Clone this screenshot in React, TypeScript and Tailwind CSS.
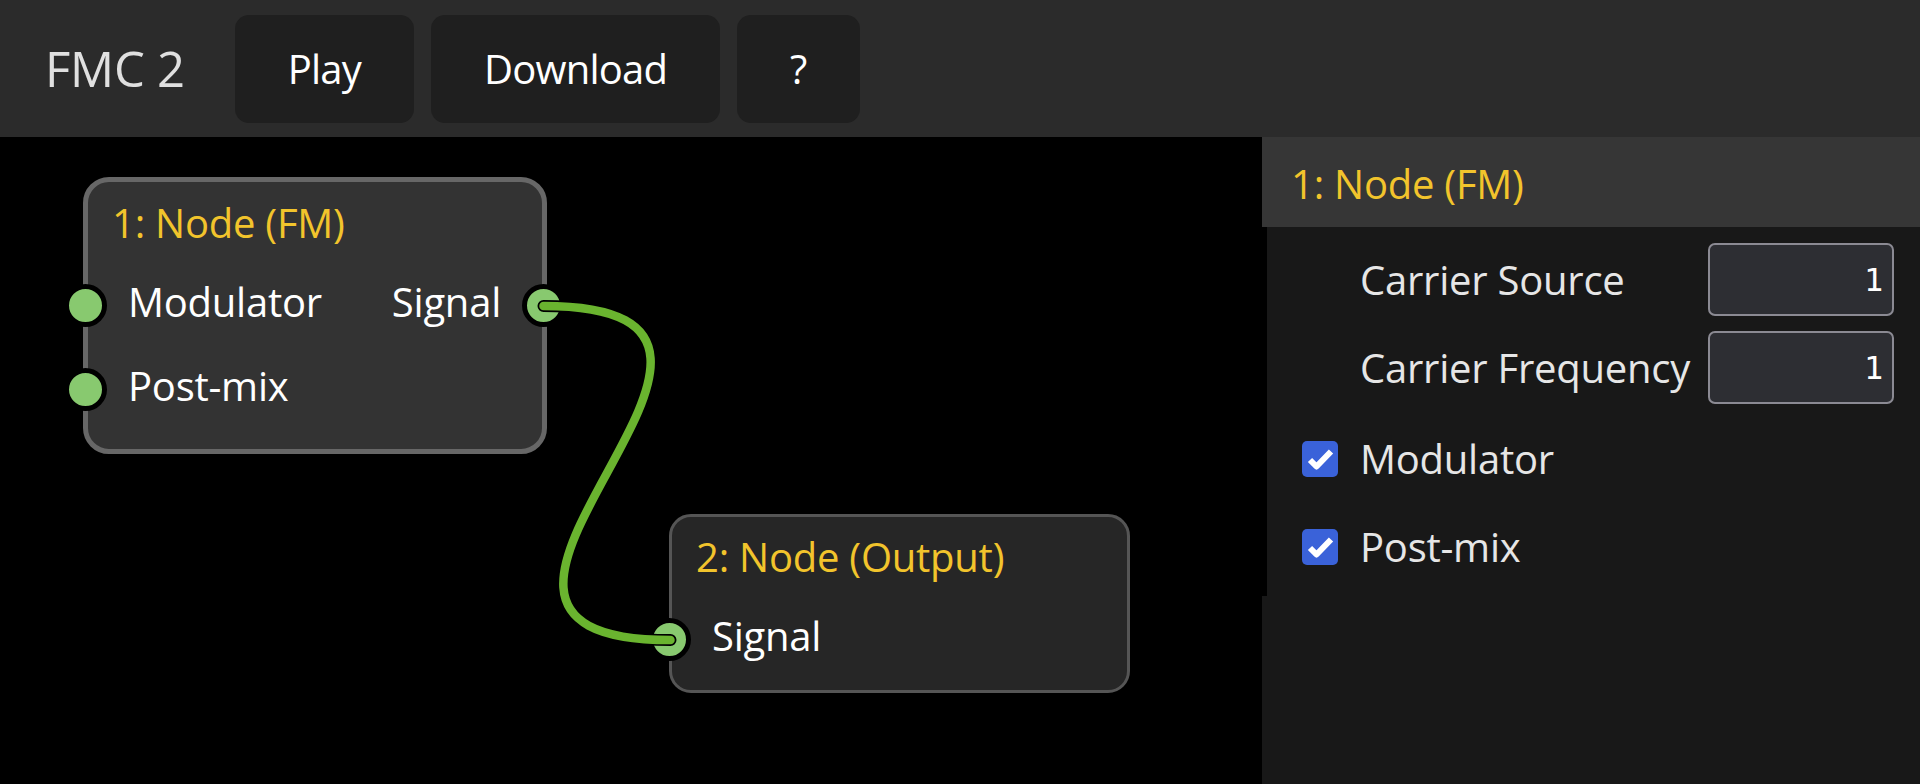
import { ReactNode } from "react";

const font = "font-['Open_Sans','Noto_Sans',sans-serif] tracking-[-0.015em]";

function Port({ side }: { side: "left" | "right" }) {
  return (
    <span
      className={`absolute top-[calc(50%-18px)] h-[43px] w-[43px] rounded-full border-[5px] border-black bg-[#88c96f] ${
        side === "left" ? "left-[-24px]" : "right-[-23px]"
      }`}
    />
  );
}

function PortRow({ left, right }: { left?: string; right?: string }) {
  return (
    <div className="relative flex h-[84px] items-center justify-between pl-[40px] pr-[41px] text-[40px] leading-[84px] text-white">
      {left ? (
        <>
          <Port side="left" />
          <span>{left}</span>
        </>
      ) : (
        <span />
      )}
      {right && (
        <>
          <span>{right}</span>
          <Port side="right" />
        </>
      )}
    </div>
  );
}

function GraphNode({
  title,
  selected,
  className,
  children,
}: {
  title: string;
  selected?: boolean;
  className: string;
  children: ReactNode;
}) {
  return (
    <div
      className={`absolute flex flex-col ${
        selected
          ? "rounded-[26px] border-[5px] border-[#676767] bg-[#333333] pt-[4px]"
          : "rounded-[22px] border-[3px] border-[#555555] bg-[#262626] pt-[3px]"
      } ${className}`}
    >
      <div className="pl-[24px] text-[40px] leading-[74px] text-[#f2c42c]">{title}</div>
      {children}
    </div>
  );
}

function NumberField({ label, value }: { label: string; value: string }) {
  return (
    <div className="flex items-center justify-between pl-[93px] pr-[26px]">
      <span className="text-[40px] leading-[56px] text-[#e6e6e6]">{label}</span>
      <div className="flex h-[73px] w-[186px] items-center justify-end rounded-[7px] border-2 border-[#8b8a93] bg-[#2d2e33] pr-[9px] font-['DejaVu_Sans_Mono',monospace] text-[32px] text-white">
        {value}
      </div>
    </div>
  );
}

function CheckRow({ label }: { label: string }) {
  return (
    <div className="flex h-[88px] items-center gap-[22px] pl-[35px]">
      <span className="flex h-[36px] w-[36px] items-center justify-center rounded-[5px] bg-[#3a62d9]">
        <svg width="36" height="36" viewBox="0 0 36 36">
          <path d="M8 19 L14.5 25.5 L29 10.5" fill="none" stroke="white" strokeWidth="6" strokeLinejoin="round" />
        </svg>
      </span>
      <span className="text-[40px] leading-[56px] text-[#e6e6e6]">{label}</span>
    </div>
  );
}

export default function App() {
  return (
    <div className={`flex h-[784px] w-full flex-col overflow-hidden bg-black ${font}`}>
      {/* top bar */}
      <header className="flex h-[137px] shrink-0 items-center bg-[#2b2b2b] pl-[45px]">
        <h1 className="text-[49px] font-normal text-[#e0e0e0]">FMC 2</h1>
        <nav className="ml-[50px] flex gap-[17px]">
          {["Play", "Download", "?"].map((b) => (
            <button
              key={b}
              className="h-[108px] rounded-[14px] bg-[#1f1f1f] px-[53px] text-[40px] tracking-[-0.02em] text-white"
            >
              {b}
            </button>
          ))}
        </nav>
      </header>

      <div className="flex min-h-0 flex-1">
        {/* node canvas */}
        <div className="relative w-[1262px] shrink-0 bg-black">
          <GraphNode title="1: Node (FM)" selected className="left-[83px] top-[40px] h-[277px] w-[464px]">
            <PortRow left="Modulator" right="Signal" />
            <PortRow left="Post-mix" />
          </GraphNode>

          <GraphNode title="2: Node (Output)" className="left-[669px] top-[377px] h-[179px] w-[461px]">
            <PortRow left="Signal" />
          </GraphNode>

          <svg className="pointer-events-none absolute inset-0" width="1262" height="647">
            <path
              d="M543.5 169 C853.5 169, 360.5 503, 670.5 503"
              fill="none"
              stroke="black"
              strokeWidth="12"
              strokeLinecap="round"
            />
            <path
              d="M543.5 169 C853.5 169, 360.5 503, 670.5 503"
              fill="none"
              stroke="#6ab42f"
              strokeWidth="8.5"
              strokeLinecap="round"
            />
          </svg>
        </div>

        {/* properties sidebar */}
        <aside className="flex flex-1 flex-col bg-[#181818]">
          <div className="flex h-[90px] shrink-0 items-center bg-[#363636] pl-[29px] pt-[3px] text-[40px] text-[#f2c42c]">
            1: Node (FM)
          </div>
          <div className="flex h-[369px] flex-col border-l-[5px] border-black pt-[16px]">
            <div className="flex flex-col gap-[15px]">
              <NumberField label="Carrier Source" value="1" />
              <NumberField label="Carrier Frequency" value="1" />
            </div>
            <div className="mt-[11px] -ml-[5px] pl-[5px]">
              <CheckRow label="Modulator" />
              <CheckRow label="Post-mix" />
            </div>
          </div>
        </aside>
      </div>
    </div>
  );
}
